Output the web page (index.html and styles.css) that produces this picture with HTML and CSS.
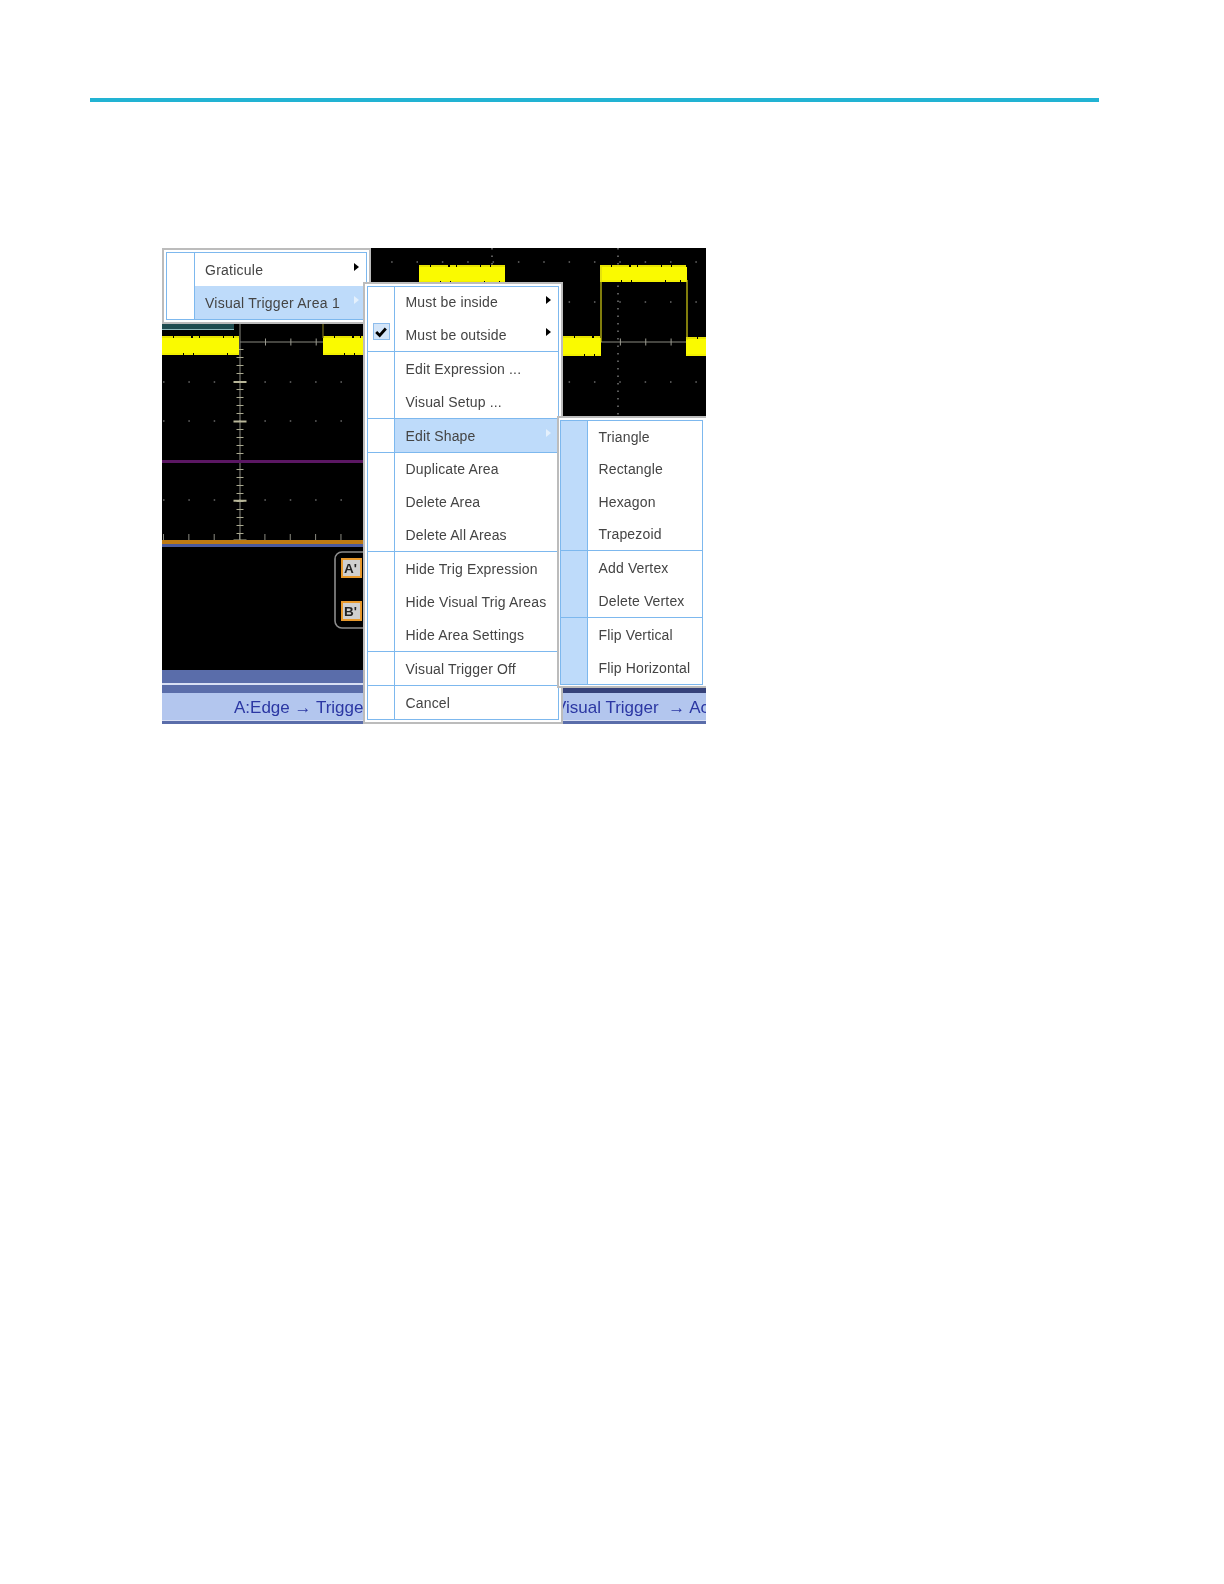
FILE: index.html
```html
<!DOCTYPE html>
<html lang="en">
<head>
    <meta charset="UTF-8">
    <title>Visual Trigger menu</title>
    <link rel="stylesheet" href="styles.css">
</head>
<body>
    <div class="rule"></div>
    <div class="shot">
        <!-- viewBox uses page coordinates so the scope drawing is easy to measure -->
        <svg class="scope" viewBox="162 248 544 476" width="544" height="476">
            <!-- graticule dots -->
            <g class="dots">
                <line x1="163" y1="262" x2="706" y2="262"/>
                <line x1="163" y1="302" x2="706" y2="302"/>
                <line x1="163" y1="382" x2="706" y2="382"/>
                <line x1="163" y1="421" x2="706" y2="421"/>
                <line x1="163" y1="500" x2="706" y2="500"/>
            </g>
            <line class="dotted" x1="492" y1="248" x2="492" y2="284"/>
            <line class="dotted" x1="618" y1="248" x2="618" y2="418"/>

            <rect class="teal" x="162" y="323" width="72" height="6"/>
            <rect class="teal-edge" x="162" y="329" width="72" height="1"/>

            <!-- centre cross -->
            <line class="axis" x1="240" y1="342" x2="706" y2="342"/>
            <line class="axis" x1="240" y1="324" x2="240" y2="542"/>
            <line class="ticks-h" x1="265" y1="342" x2="706" y2="342"/>
            <line class="ticks-v" x1="240" y1="349" x2="240" y2="540"/>
            <line class="ticks-major" x1="240" y1="381" x2="240" y2="540"/>

            <!-- trace -->
            <g class="trace">
                <rect x="162" y="338" width="77" height="15"/>
                <rect x="323" y="338" width="42" height="15"/>
                <rect x="563" y="338" width="38" height="16"/>
                <rect x="686" y="339" width="20" height="15"/>
                <rect x="419" y="267" width="86" height="14"/>
                <rect x="600" y="267" width="87" height="13"/>
            </g>
            <g class="trace-noise">
                <line x1="162" y1="337" x2="239" y2="337"/>
                <line x1="323" y1="337" x2="365" y2="337"/>
                <line x1="563" y1="337" x2="601" y2="337"/>
                <line x1="686" y1="338" x2="706" y2="338"/>
                <line x1="419" y1="266" x2="505" y2="266"/>
                <line x1="600" y1="266" x2="687" y2="266"/>
            </g>
            <g class="trace-noise-low">
                <line x1="162" y1="354" x2="239" y2="354"/>
                <line x1="323" y1="354" x2="365" y2="354"/>
                <line x1="563" y1="355" x2="601" y2="355"/>
                <line x1="686" y1="355" x2="706" y2="355"/>
                <line x1="419" y1="282" x2="505" y2="282"/>
                <line x1="600" y1="281" x2="687" y2="281"/>
            </g>
            <line class="edge" x1="601" y1="267" x2="601" y2="342"/>
            <line class="edge" x1="687" y1="280" x2="687" y2="340"/>
            <line class="edge-dim" x1="323" y1="324" x2="323" y2="338"/>

            <line class="purple" x1="162" y1="461.5" x2="365" y2="461.5"/>
            <line class="ticks-bottom" x1="163" y1="537" x2="365" y2="537"/>
            <rect class="orange" x="162" y="540" width="204" height="4"/>
            <rect class="band-dark" x="162" y="544" width="204" height="3"/>

            <!-- A' B' cursor box -->
            <rect class="cursor-box" x="335" y="552" width="40" height="76" rx="7"/>
            <rect class="badge" x="342" y="559" width="19" height="18"/>
            <text class="badge-text" x="344" y="573">A'</text>
            <rect class="badge" x="342" y="602" width="19" height="18"/>
            <text class="badge-text" x="344" y="616">B'</text>

            <!-- status bars -->
            <rect class="band" x="162" y="670" width="544" height="13"/>
            <rect class="band-line" x="162" y="683" width="544" height="2"/>
            <rect class="band" x="162" y="685" width="544" height="8"/>
            <rect class="band-light" x="162" y="693" width="544" height="27"/>
            <rect class="band-line" x="162" y="720" width="544" height="1"/>
            <rect class="band" x="162" y="721" width="544" height="3"/>
            <rect class="band-shade" x="563" y="688" width="143" height="5"/>
            <text class="status" x="234" y="713">A:Edge → Trigger</text>
            <text class="status" x="555" y="713">Visual Trigger <tspan dx="5">→</tspan> Ac</text>
        </svg>

        <div class="menu menu-top">
            <div class="menu-list list-top">
                <div class="section">
                    <div class="gutter"></div>
                    <div class="items">
                        <div class="item has-sub">Graticule</div>
                        <div class="item has-sub active">Visual Trigger Area 1</div>
                    </div>
                </div>
            </div>
        </div>

        <div class="menu menu-area">
            <div class="menu-list list-area">
                <div class="section">
                    <div class="gutter"><span class="check"><svg viewBox="0 0 16 16" width="14" height="14"><path d="M2.5 8 L6.5 12 L13.5 4" fill="none" stroke="#000" stroke-width="3.2"/></svg></span></div>
                    <div class="items items-first">
                        <div class="item has-sub">Must be inside</div>
                        <div class="item has-sub">Must be outside</div>
                    </div>
                </div>
                <div class="section">
                    <div class="gutter"></div>
                    <div class="items">
                        <div class="item">Edit Expression ...</div>
                        <div class="item">Visual Setup ...</div>
                    </div>
                </div>
                <div class="section">
                    <div class="gutter"></div>
                    <div class="items">
                        <div class="item has-sub active">Edit Shape</div>
                    </div>
                </div>
                <div class="section">
                    <div class="gutter"></div>
                    <div class="items">
                        <div class="item">Duplicate Area</div>
                        <div class="item">Delete Area</div>
                        <div class="item">Delete All Areas</div>
                    </div>
                </div>
                <div class="section">
                    <div class="gutter"></div>
                    <div class="items">
                        <div class="item">Hide Trig Expression</div>
                        <div class="item">Hide Visual Trig Areas</div>
                        <div class="item">Hide Area Settings</div>
                    </div>
                </div>
                <div class="section">
                    <div class="gutter"></div>
                    <div class="items">
                        <div class="item">Visual Trigger Off</div>
                    </div>
                </div>
                <div class="section">
                    <div class="gutter"></div>
                    <div class="items">
                        <div class="item">Cancel</div>
                    </div>
                </div>
            </div>
        </div>

        <div class="menu menu-shape">
            <div class="menu-list list-shape">
                <div class="section">
                    <div class="gutter"></div>
                    <div class="items">
                        <div class="item">Triangle</div>
                        <div class="item">Rectangle</div>
                        <div class="item">Hexagon</div>
                        <div class="item">Trapezoid</div>
                    </div>
                </div>
                <div class="section">
                    <div class="gutter"></div>
                    <div class="items">
                        <div class="item">Add Vertex</div>
                        <div class="item">Delete Vertex</div>
                    </div>
                </div>
                <div class="section">
                    <div class="gutter"></div>
                    <div class="items">
                        <div class="item">Flip Vertical</div>
                        <div class="item">Flip Horizontal</div>
                    </div>
                </div>
            </div>
        </div>
    </div>
</body>
</html>
```
FILE: styles.css
```css
body {
    margin: 0;
    padding: 98px 0 0 90px;
    background: #fff;
    font-family: "Liberation Sans", Arial, sans-serif;
}

.rule {
    width: 1009px;
    height: 4px;
    background: #22b3d3;
}

.shot {
    position: relative;
    width: 544px;
    height: 476px;
    margin: 146px 0 0 72px;
    overflow: hidden;
    background: #000;
    filter: blur(0.5px);
}

.scope {
    display: block;
}

/* scope drawing */
.dots line {
    stroke: #6a6a6a;
    stroke-width: 1.5;
    stroke-dasharray: 1.5 23.85;
}

.dotted {
    stroke: #777;
    stroke-width: 1.5;
    stroke-dasharray: 1.5 6;
}

.teal {
    fill: #1f4c50;
}

.teal-edge {
    fill: #8fb9bd;
}

.axis {
    stroke: #8a8a80;
    stroke-width: 1;
}

.ticks-h {
    stroke: #9a9a90;
    stroke-width: 7;
    stroke-dasharray: 1 24.35;
}

.ticks-v {
    stroke: #aaaa90;
    stroke-width: 7;
    stroke-dasharray: 1 7;
}

.ticks-major {
    stroke: #b8b698;
    stroke-width: 13;
    stroke-dasharray: 2 37.6;
}

.trace rect {
    fill: #fafa00;
}

.trace-noise line {
    stroke: #e6e200;
    stroke-width: 2;
    stroke-dasharray: 11 1 17 2 6 1 23 1 9 1 14 1 5 1 19 1;
}

.trace-noise-low line {
    stroke: #f2f000;
    stroke-width: 2;
    stroke-dasharray: 21 1 9 1 33 1 14 1 27 1;
}

.edge {
    stroke: #d8d215;
    stroke-width: 1.2;
}

.edge-dim {
    stroke: #77701c;
    stroke-width: 1.2;
}

.purple {
    stroke: #5b1763;
    stroke-width: 3;
}

.ticks-bottom {
    stroke: #8a8a80;
    stroke-width: 6;
    stroke-dasharray: 1 24.35;
}

.orange {
    fill: #bd7a14;
}

.band-dark {
    fill: #4a5a9c;
}

.cursor-box {
    fill: #000;
    stroke: #8c8c8c;
    stroke-width: 1.6;
}

.badge {
    fill: #d0d0d0;
    stroke: #e8992c;
    stroke-width: 2;
}

.badge-text {
    font-size: 13.5px;
    font-weight: bold;
    fill: #222;
}

.band {
    fill: #5a6daa;
}

.band-line {
    fill: #d8dff4;
}

.band-light {
    fill: #b3c6ee;
}

.band-shade {
    fill: #36427a;
}

.status {
    font-size: 17px;
    fill: #2b37a3;
}

/* popup menus */
.menu {
    position: absolute;
    box-sizing: border-box;
    border: 2px solid #bcbcbc;
    padding: 2px;
    background: #fff;
}

.menu-top {
    top: 0;
    left: 0;
    width: 209px;
}

.menu-area {
    top: 34px;
    left: 201px;
    width: 200px;
}

.menu-shape {
    top: 168px;
    left: 395px;
    width: 149px;
    padding: 2px 3px 1px 1px;
    border-right: 0;
}

.menu-list {
    display: grid;
    gap: 1px;
    border: 1px solid #7db8ee;
    background: #7db8ee;
}

.list-top {
    grid-template-rows: 66px;
}

.list-area {
    grid-template-rows: 64px 66px 33px 98px 99px 33px 33px;
}

.list-shape {
    grid-template-rows: 129px 66px 66px;
}

.section {
    display: flex;
    background: #fff;
}

.gutter {
    display: flex;
    flex-direction: column;
    justify-content: flex-end;
    align-items: center;
    flex: none;
    width: 26px;
    border-right: 1px solid #7db8ee;
}

.menu-top .gutter {
    width: 27px;
}

.menu-shape .gutter {
    background: #bedbfa;
}

.check {
    display: flex;
    justify-content: center;
    align-items: center;
    box-sizing: border-box;
    width: 17px;
    height: 17px;
    margin-bottom: 11px;
    border: 1px solid #8dbcec;
    background: #d3e5f9;
}

.items {
    display: flex;
    flex-direction: column;
    flex: 1;
}

.items-first {
    margin-top: -1px;
}

.item {
    display: flex;
    justify-content: space-between;
    align-items: center;
    flex: 1;
    padding: 0 7px 0 10.5px;
    font-size: 14px;
    letter-spacing: 0.15px;
    color: #444;
    white-space: nowrap;
}

.menu-top .item {
    padding-left: 10px;
    letter-spacing: 0.25px;
}

.active {
    background: #bedbfa;
}

.has-sub::after {
    content: "";
    margin-top: -5px;
    border-left: 5px solid #000;
    border-top: 4.5px solid transparent;
    border-bottom: 4.5px solid transparent;
}

.active::after {
    border-left-color: #e4f0fc;
}
```
